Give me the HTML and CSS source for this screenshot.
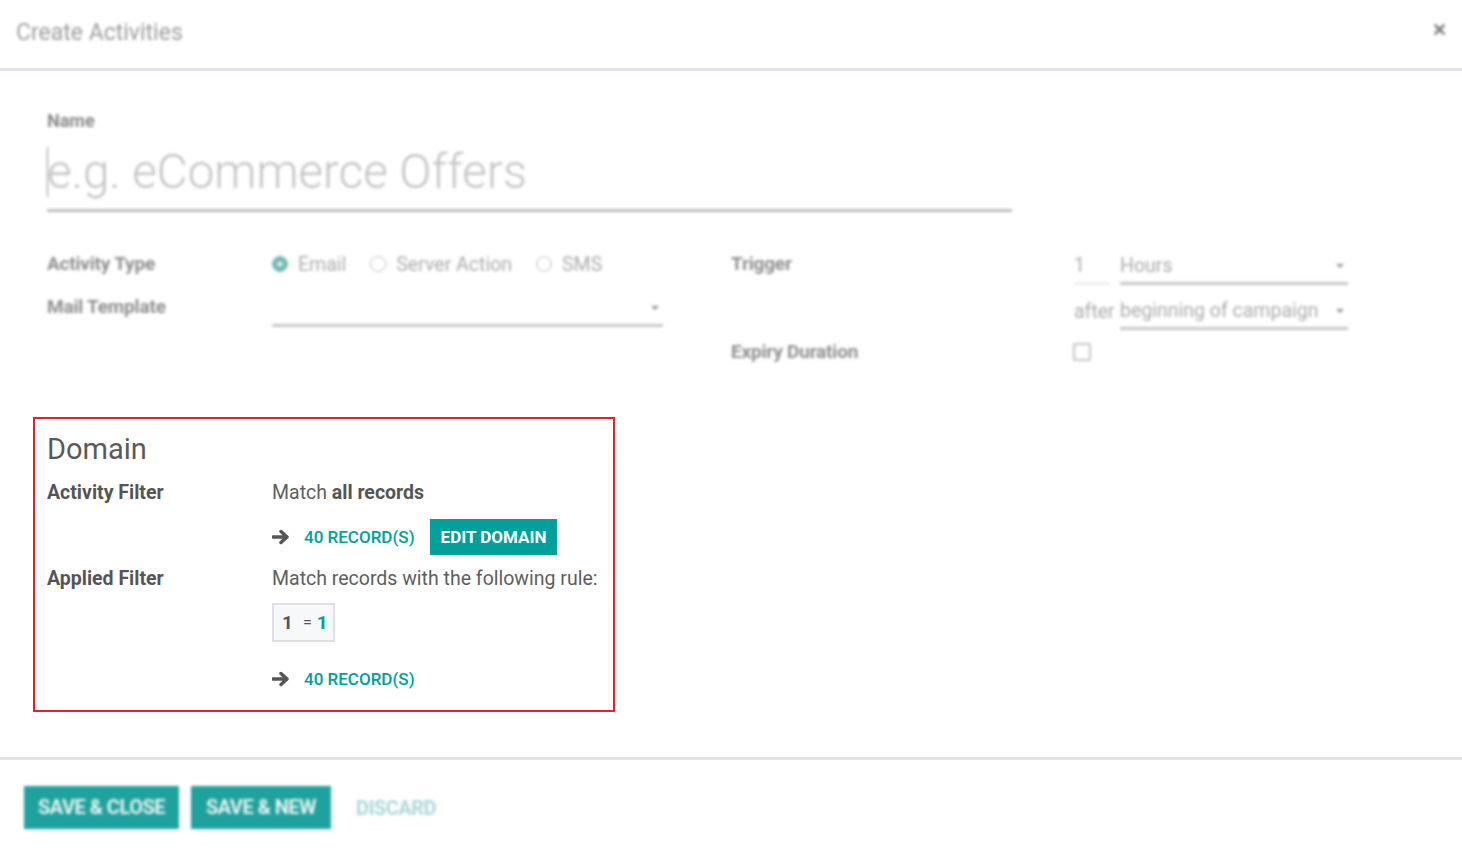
FILE: index.html
```html
<!DOCTYPE html>
<html>
<head>
<meta charset="utf-8">
<link rel="stylesheet" href="styles.css">
</head>
<body>
<div class="dialog">
  <header class="header">
    <div class="title blur">Create Activities</div>
    <div class="close blur">&#x2715;</div>
  </header>
  <main class="body">
    <section class="blur name-section">
      <div class="name-label">Name</div>
      <div class="name-input"><span class="caret-bar"></span>e.g. eCommerce Offers</div>
    </section>
    <section class="blur form-grid">
      <div class="group left">
        <div class="lbl">Activity Type</div>
        <div class="fld radios">
          <span class="radio checked"></span><span class="rtext">Email</span>
          <span class="radio"></span><span class="rtext">Server Action</span>
          <span class="radio"></span><span class="rtext">SMS</span>
        </div>
        <div class="lbl">Mail Template</div>
        <div class="fld"><div class="select"><span></span><i class="tri"></i></div></div>
      </div>
      <div class="group right">
        <div class="lbl">Trigger</div>
        <div class="fld trig">
          <span class="num">1</span>
          <div class="select"><span>Hours</span><i class="tri"></i></div>
        </div>
        <div class="lbl"></div>
        <div class="fld trig">
          <span class="after">after</span>
          <div class="select"><span>beginning of campaign</span><i class="tri"></i></div>
        </div>
        <div class="lbl">Expiry Duration</div>
        <div class="fld checkcell"><span class="check"></span></div>
      </div>
    </section>
    <section class="domain">
      <h2 class="dtitle">Domain</h2>
      <div class="drow">
        <div class="dlbl">Activity Filter</div>
        <div class="dval">
          <div class="dtext">Match <b>all records</b></div>
          <div class="recs">
            <svg class="arrow" width="18" height="16" viewBox="0 0 18 16"><path d="M1 8h13M9 2.5 15 8l-6 5.5" fill="none" stroke="#555" stroke-width="3.4" stroke-linecap="round" stroke-linejoin="round"/></svg>
            <span class="reclink">40 RECORD(S)</span>
            <span class="btn-edit">EDIT DOMAIN</span>
          </div>
        </div>
      </div>
      <div class="drow">
        <div class="dlbl">Applied Filter</div>
        <div class="dval">
          <div class="dtext">Match records with the following rule:</div>
          <div class="rule"><b class="rl">1</b><span class="req">=</span><b class="rr">1</b></div>
          <div class="recs last">
            <svg class="arrow" width="18" height="16" viewBox="0 0 18 16"><path d="M1 8h13M9 2.5 15 8l-6 5.5" fill="none" stroke="#555" stroke-width="3.4" stroke-linecap="round" stroke-linejoin="round"/></svg>
            <span class="reclink">40 RECORD(S)</span>
          </div>
        </div>
      </div>
    </section>
  </main>
  <footer class="footer">
    <div class="blur buttons">
      <span class="btn">SAVE &amp; CLOSE</span>
      <span class="btn">SAVE &amp; NEW</span>
      <span class="discard">DISCARD</span>
    </div>
  </footer>
</div>
</body>
</html>
```

FILE: styles.css
```css
html, body {
  margin: 0;
  padding: 0;
  background: #fff;
}
body {
  font-family: Roboto, "Noto Sans", sans-serif;
  color: #4c4c4c;
  width: 1462px;
  height: 863px;
  overflow: hidden;
}
.blur {
  filter: blur(1.4px);
}
.header {
  display: flex;
  align-items: center;
  justify-content: space-between;
  padding: 0 16px;
  border-bottom: 3px solid #dfe2e8;
  box-sizing: border-box;
  height: 71px;
}
.title {
  font-size: 23px;
  color: #9b9b9b;
  margin-top: -4px;
}
.close {
  font-size: 18px;
  font-weight: bold;
  color: #777;
  margin-top: -10px;
  margin-right: -1px;
}
.body {
  padding: 0 0 0 47px;
}
.name-section {
  padding-top: 39px;
  width: 965px;
}
.name-label {
  font-size: 18px;
  font-weight: bold;
  color: #888;
  line-height: 22px;
}
.name-input {
  position: relative;
  font-size: 47.5px;
  font-weight: 300;
  color: #c3c3c3;
  line-height: 58px;
  margin-top: 11px;
  border-bottom: 3px solid #bdbdbd;
  padding-bottom: 8px;
}
.caret-bar {
  position: absolute;
  left: 0;
  top: 4px;
  width: 1px;
  height: 50px;
  background: #888;
}
.form-grid {
  display: flex;
  margin-top: 38px;
  gap: 68px;
}
.group {
  display: grid;
  align-content: start;
}
.group.left {
  grid-template-columns: 225px 391px;
  grid-template-rows: 43px 34px;
}
.group.right {
  grid-template-columns: 343px 274px;
  grid-template-rows: 46px 42px 28px;
}
.lbl {
  font-size: 19px;
  font-weight: bold;
  color: #8e8e8e;
  line-height: 28px;
  letter-spacing: -0.2px;
}
.fld {
  font-size: 19.5px;
  color: #ababab;
}
.radios {
  display: flex;
  align-items: center;
  height: 28px;
}
.radio {
  width: 16px;
  height: 16px;
  border: 1.5px solid #bbb;
  border-radius: 50%;
  box-sizing: border-box;
  margin-right: 10px;
}
.radio.checked {
  border-color: #72b8b3;
  background: #72b8b3;
  box-shadow: inset 0 0 0 4.5px #72b8b3, inset 0 0 0 8px #e8f4f3;
}
.rtext {
  margin-right: 24px;
}
.select {
  display: flex;
  align-items: center;
  justify-content: space-between;
  border-bottom: 3px solid #c6c6c6;
  height: 35px;
  box-sizing: border-box;
  flex: 1;
  padding-bottom: 1px;
}
.group.left .select { height: 34px; }
.tri {
  width: 0;
  height: 0;
  border-left: 4px solid transparent;
  border-right: 4px solid transparent;
  border-top: 4px solid #8f8f8f;
  margin-right: 4px;
}
.trig {
  display: flex;
  align-items: flex-end;
  height: 35px;
}
.trig .num {
  width: 36px;
  border-bottom: 1px solid #d2d2d2;
  height: 34px;
  line-height: 32px;
  margin-right: 10px;
  box-sizing: border-box;
  margin-bottom: 1px;
}
.trig .after {
  width: 46px;
  line-height: 32px;
  align-self: center;
  margin-top: -2px;
}
.group.right .fld:nth-child(4) { height: 34px; }
.checkcell {
  display: flex;
  align-items: center;
  height: 28px;
}
.check {
  display: inline-block;
  width: 18px;
  height: 18px;
  border: 2px solid #c4c4c4;
  border-radius: 2px;
  box-sizing: border-box;
  margin-left: -1px;
}

/* Domain */
.domain {
  margin-top: 51px;
  margin-left: -14px;
  width: 582px;
  height: 295px;
  border: 2px solid #e3222c;
  box-sizing: border-box;
  padding: 10px 12px 0;
}
.dtitle {
  margin: 0 0 9px;
  font-size: 29px;
  font-weight: 400;
  color: #5a5a5a;
  line-height: 40px;
}
.drow {
  display: flex;
}
.dlbl {
  width: 225px;
  flex: none;
  font-size: 19.5px;
  font-weight: bold;
  color: #555;
  line-height: 24px;
  padding-top: 3px;
}
.dval {
  font-size: 19.5px;
  color: #5e5e5e;
  line-height: 24px;
}
.dval > .dtext {
  padding-top: 3px;
}
.dtext b {
  font-weight: bold;
  color: #555;
}
.recs {
  display: flex;
  align-items: center;
  margin-top: 14px;
  margin-bottom: 9px;
}
.recs.last {
  margin-top: 25px;
}
.arrow {
  margin-right: 14px;
}
.reclink {
  color: #00a09d;
  font-size: 17px;
  font-weight: 500;
  margin-right: 15px;
}
.btn-edit {
  background: #00a09d;
  color: #fff;
  font-size: 17px;
  font-weight: bold;
  padding: 0 11px;
  height: 36px;
  line-height: 36px;
}
.rule {
  margin-top: 12px;
  display: inline-flex;
  align-items: center;
  height: 39px;
  box-sizing: border-box;
  border: 2px solid #dde1e7;
  background: #f7f8fa;
  padding: 0 5px 0 8px;
}
.rl {
  color: #555;
  font-size: 19px;
}
.req {
  font-size: 16px;
  color: #555;
  margin: 0 5px 0 10px;
}
.rr {
  color: #00a09d;
  font-size: 19px;
}

/* footer */
.footer {
  margin-top: 45px;
  border-top: 3px solid #dfe2e8;
  padding: 26px 0 0 24px;
}
.buttons {
  display: flex;
  align-items: center;
}
.btn {
  background: #1fa29d;
  color: #e8f4f3;
  font-size: 20px;
  font-weight: bold;
  height: 43px;
  line-height: 43px;
  margin-right: 12px;
  letter-spacing: -0.5px;
  text-align: center;
}
.btn:first-child { width: 155px; }
.btn:nth-child(2) { width: 140px; }
.discard {
  color: #a9d8d6;
  font-size: 20px;
  font-weight: bold;
  margin-left: 13px;
  letter-spacing: -0.5px;
}
```
